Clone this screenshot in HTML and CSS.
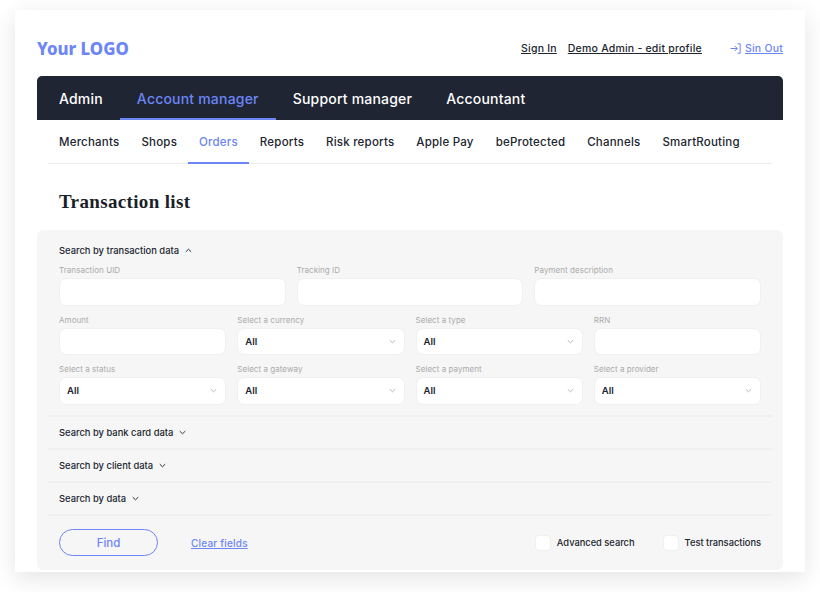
FILE: index.html
```html
<!DOCTYPE html>
<html lang="en">
<head>
    <meta charset="UTF-8">
    <meta name="viewport" content="width=device-width, initial-scale=1.0">
    <title>Transaction list</title>
    <link rel="stylesheet" href="styles.css">
</head>
<body>

    <div class="card">
        <header class="top">
            <div class="logo">Your LOGO</div>
            <div class="user-links">
                <a href="#">Sign In</a>
                <a href="#">Demo Admin - edit profile</a>
                <a href="#" class="sign-out">
                    <svg width="11" height="11" viewBox="0 0 11 11" fill="none" stroke="#6c85f7" stroke-width="1">
                        <path d="M0.5 5.5H7M4.8 3L7.3 5.5L4.8 8M7.5 0.8H10.2V10.2H7.5"/>
                    </svg>
                    <span>Sin Out</span>
                </a>
            </div>
        </header>

        <nav class="main-nav">
            <a href="#">Admin</a>
            <a href="#" class="active">Account manager</a>
            <a href="#">Support manager</a>
            <a href="#">Accountant</a>
        </nav>

        <nav class="sub-nav">
            <a href="#">Merchants</a>
            <a href="#">Shops</a>
            <a href="#" class="active">Orders</a>
            <a href="#">Reports</a>
            <a href="#">Risk reports</a>
            <a href="#">Apple Pay</a>
            <a href="#">beProtected</a>
            <a href="#">Channels</a>
            <a href="#">SmartRouting</a>
        </nav>

        <h1>Transaction list</h1>

        <form class="filters">
            <div class="section open">
                <div class="section-title">
                    Search by transaction data
                    <svg class="chev" width="7" height="5" viewBox="0 0 7 5" fill="none" stroke="#2a2f3a" stroke-width="1"><path d="M0.8 3.8L3.5 1.2L6.2 3.8"/></svg>
                </div>
                <div class="row three">
                    <div class="field"><label>Transaction UID</label><input type="text"></div>
                    <div class="field"><label>Tracking ID</label><input type="text"></div>
                    <div class="field"><label>Payment description</label><input type="text"></div>
                </div>
                <div class="row four">
                    <div class="field"><label>Amount</label><input type="text"></div>
                    <div class="field"><label>Select a currency</label><div class="select">All<svg width="7" height="5" viewBox="0 0 7 5" fill="none" stroke="#b5b5b5" stroke-width="1"><path d="M0.8 1.2L3.5 3.8L6.2 1.2"/></svg></div></div>
                    <div class="field"><label>Select a type</label><div class="select">All<svg width="7" height="5" viewBox="0 0 7 5" fill="none" stroke="#b5b5b5" stroke-width="1"><path d="M0.8 1.2L3.5 3.8L6.2 1.2"/></svg></div></div>
                    <div class="field"><label>RRN</label><input type="text"></div>
                </div>
                <div class="row four">
                    <div class="field"><label>Select a status</label><div class="select">All<svg width="7" height="5" viewBox="0 0 7 5" fill="none" stroke="#b5b5b5" stroke-width="1"><path d="M0.8 1.2L3.5 3.8L6.2 1.2"/></svg></div></div>
                    <div class="field"><label>Select a gateway</label><div class="select">All<svg width="7" height="5" viewBox="0 0 7 5" fill="none" stroke="#b5b5b5" stroke-width="1"><path d="M0.8 1.2L3.5 3.8L6.2 1.2"/></svg></div></div>
                    <div class="field"><label>Select a payment</label><div class="select">All<svg width="7" height="5" viewBox="0 0 7 5" fill="none" stroke="#b5b5b5" stroke-width="1"><path d="M0.8 1.2L3.5 3.8L6.2 1.2"/></svg></div></div>
                    <div class="field"><label>Select a provider</label><div class="select">All<svg width="7" height="5" viewBox="0 0 7 5" fill="none" stroke="#b5b5b5" stroke-width="1"><path d="M0.8 1.2L3.5 3.8L6.2 1.2"/></svg></div></div>
                </div>
            </div>

            <div class="section">
                <div class="section-title">
                    Search by bank card data
                    <svg class="chev" width="7" height="5" viewBox="0 0 7 5" fill="none" stroke="#2a2f3a" stroke-width="1"><path d="M0.8 1.2L3.5 3.8L6.2 1.2"/></svg>
                </div>
            </div>
            <div class="section">
                <div class="section-title">
                    Search by client data
                    <svg class="chev" width="7" height="5" viewBox="0 0 7 5" fill="none" stroke="#2a2f3a" stroke-width="1"><path d="M0.8 1.2L3.5 3.8L6.2 1.2"/></svg>
                </div>
            </div>
            <div class="section">
                <div class="section-title">
                    Search by data
                    <svg class="chev" width="7" height="5" viewBox="0 0 7 5" fill="none" stroke="#2a2f3a" stroke-width="1"><path d="M0.8 1.2L3.5 3.8L6.2 1.2"/></svg>
                </div>
            </div>

            <div class="actions">
                <button type="button" class="find">Find</button>
                <a href="#" class="clear">Clear fields</a>
                <div class="checks">
                    <div class="check"><span class="box"></span>Advanced search</div>
                    <div class="check"><span class="box"></span>Test transactions</div>
                </div>
            </div>
        </form>
    </div>

</body>
</html>
```

FILE: styles.css
```css
* { margin: 0; padding: 0; box-sizing: border-box; font-family: Inter, Arial, sans-serif; }
html, body { height: 592px; overflow: hidden; }
body {
    background: white;
    color: #20252f;
    padding: 10px 15px 20px;
}
a { color: inherit; }
.card {
    height: 562px;
    background: white;
    padding: 0 22px;
    box-shadow: 0 6px 22px rgba(0, 0, 0, 0.11);
}

/* top line */
.top {
    height: 66px;
    padding-top: 10px;
    display: flex;
    align-items: center;
    justify-content: space-between;
}
.logo {
    font-family: "Noto Sans", sans-serif;
    font-size: 16.8px;
    font-weight: 800;
    color: #6c85f7;
}
.user-links {
    display: flex;
    align-items: center;
    font-size: 10.5px;
    font-weight: 500;
    letter-spacing: 0.22px;
}
.user-links a { margin-left: 11px; }
.user-links .sign-out {
    margin-left: 28px;
    color: #6c85f7;
    display: flex;
    align-items: center;
    gap: 4px;
}
.sign-out span { text-decoration: underline; }

/* dark tabs */
.main-nav {
    height: 44px;
    background: #1f2533;
    border-radius: 5px 5px 0 0;
    padding-left: 5px;
    display: flex;
}
.main-nav a {
    padding: 2px 17px 0;
    display: flex;
    align-items: center;
    color: white;
    font-size: 14px;
    font-weight: 500;
    letter-spacing: 0.2px;
    text-decoration: none;
    border-bottom: 2px solid transparent;
}
.main-nav a.active { color: #6c85f7; border-bottom-color: #6c85f7; }

.sub-nav {
    height: 44px;
    margin: 0 11px;
    border-bottom: 1px solid #eeeeee;
    display: flex;
}
.sub-nav a {
    padding: 2px 11px 0;
    display: flex;
    align-items: center;
    font-size: 11.5px;
    font-weight: 500;
    letter-spacing: 0.21px;
    text-decoration: none;
    border-bottom: 2px solid transparent;
    margin-bottom: -1px;
}
.sub-nav a.active { color: #6c85f7; border-bottom-color: #6c85f7; }

h1 {
    font-family: "Liberation Serif", serif;
    font-size: 19px;
    font-weight: 700;
    letter-spacing: 0.35px;
    height: 66px;
    padding: 27px 0 0 22px;
    line-height: 22px;
    color: #1b1f29;
}

/* filter panel */
.filters {
    height: 340px;
    background: #f6f6f6;
    border-radius: 6px;
    padding: 0 11px;
}
.section { border-bottom: 2px solid #f0f0f0; height: 33px; padding: 0 11px; }
.section.open { height: 187px; }
.section-title {
    height: 31px;
    display: flex;
    align-items: center;
    gap: 6px;
    font-size: 9.4px;
    font-weight: 500;
}
.section.open .section-title { height: 40px; }
.chev { flex: none; }

.row { display: grid; gap: 11px; margin-bottom: 9px; }
.row.three { grid-template-columns: repeat(3, 1fr); margin-top: -5px; }
.row.four { grid-template-columns: repeat(4, 1fr); }
.field label {
    display: block;
    height: 13px;
    line-height: 10px;
    font-size: 8px;
    letter-spacing: 0.05px;
    color: #aaaaaa;
}
input, .select {
    display: flex;
    width: 100%;
    height: 27.5px;
    background: white;
    border: 1px solid #f0f0f0;
    border-radius: 7px;
    outline: none;
}
.select {
    align-items: center;
    justify-content: space-between;
    padding: 0 8px 0 7px;
    font-size: 9.5px;
    font-weight: 600;
}

/* bottom line */
.actions {
    height: 53px;
    padding: 0 11px;
    display: flex;
    align-items: center;
}
.find {
    width: 99px;
    height: 27.5px;
    background: transparent;
    border: 1px solid #6c85f7;
    border-radius: 14px;
    color: #6c85f7;
    font-size: 11.5px;
    font-weight: 500;
}
.clear {
    margin-left: 33px;
    color: #6c85f7;
    font-size: 10px;
    font-weight: 500;
    letter-spacing: 0.2px;
}
.checks { margin-left: auto; display: flex; gap: 28px; }
.check {
    display: flex;
    align-items: center;
    gap: 6px;
    font-size: 9.3px;
    font-weight: 500;
}
.box {
    width: 16px;
    height: 16px;
    background: white;
    border: 1px solid #f0f0f0;
    border-radius: 4px;
}
```
